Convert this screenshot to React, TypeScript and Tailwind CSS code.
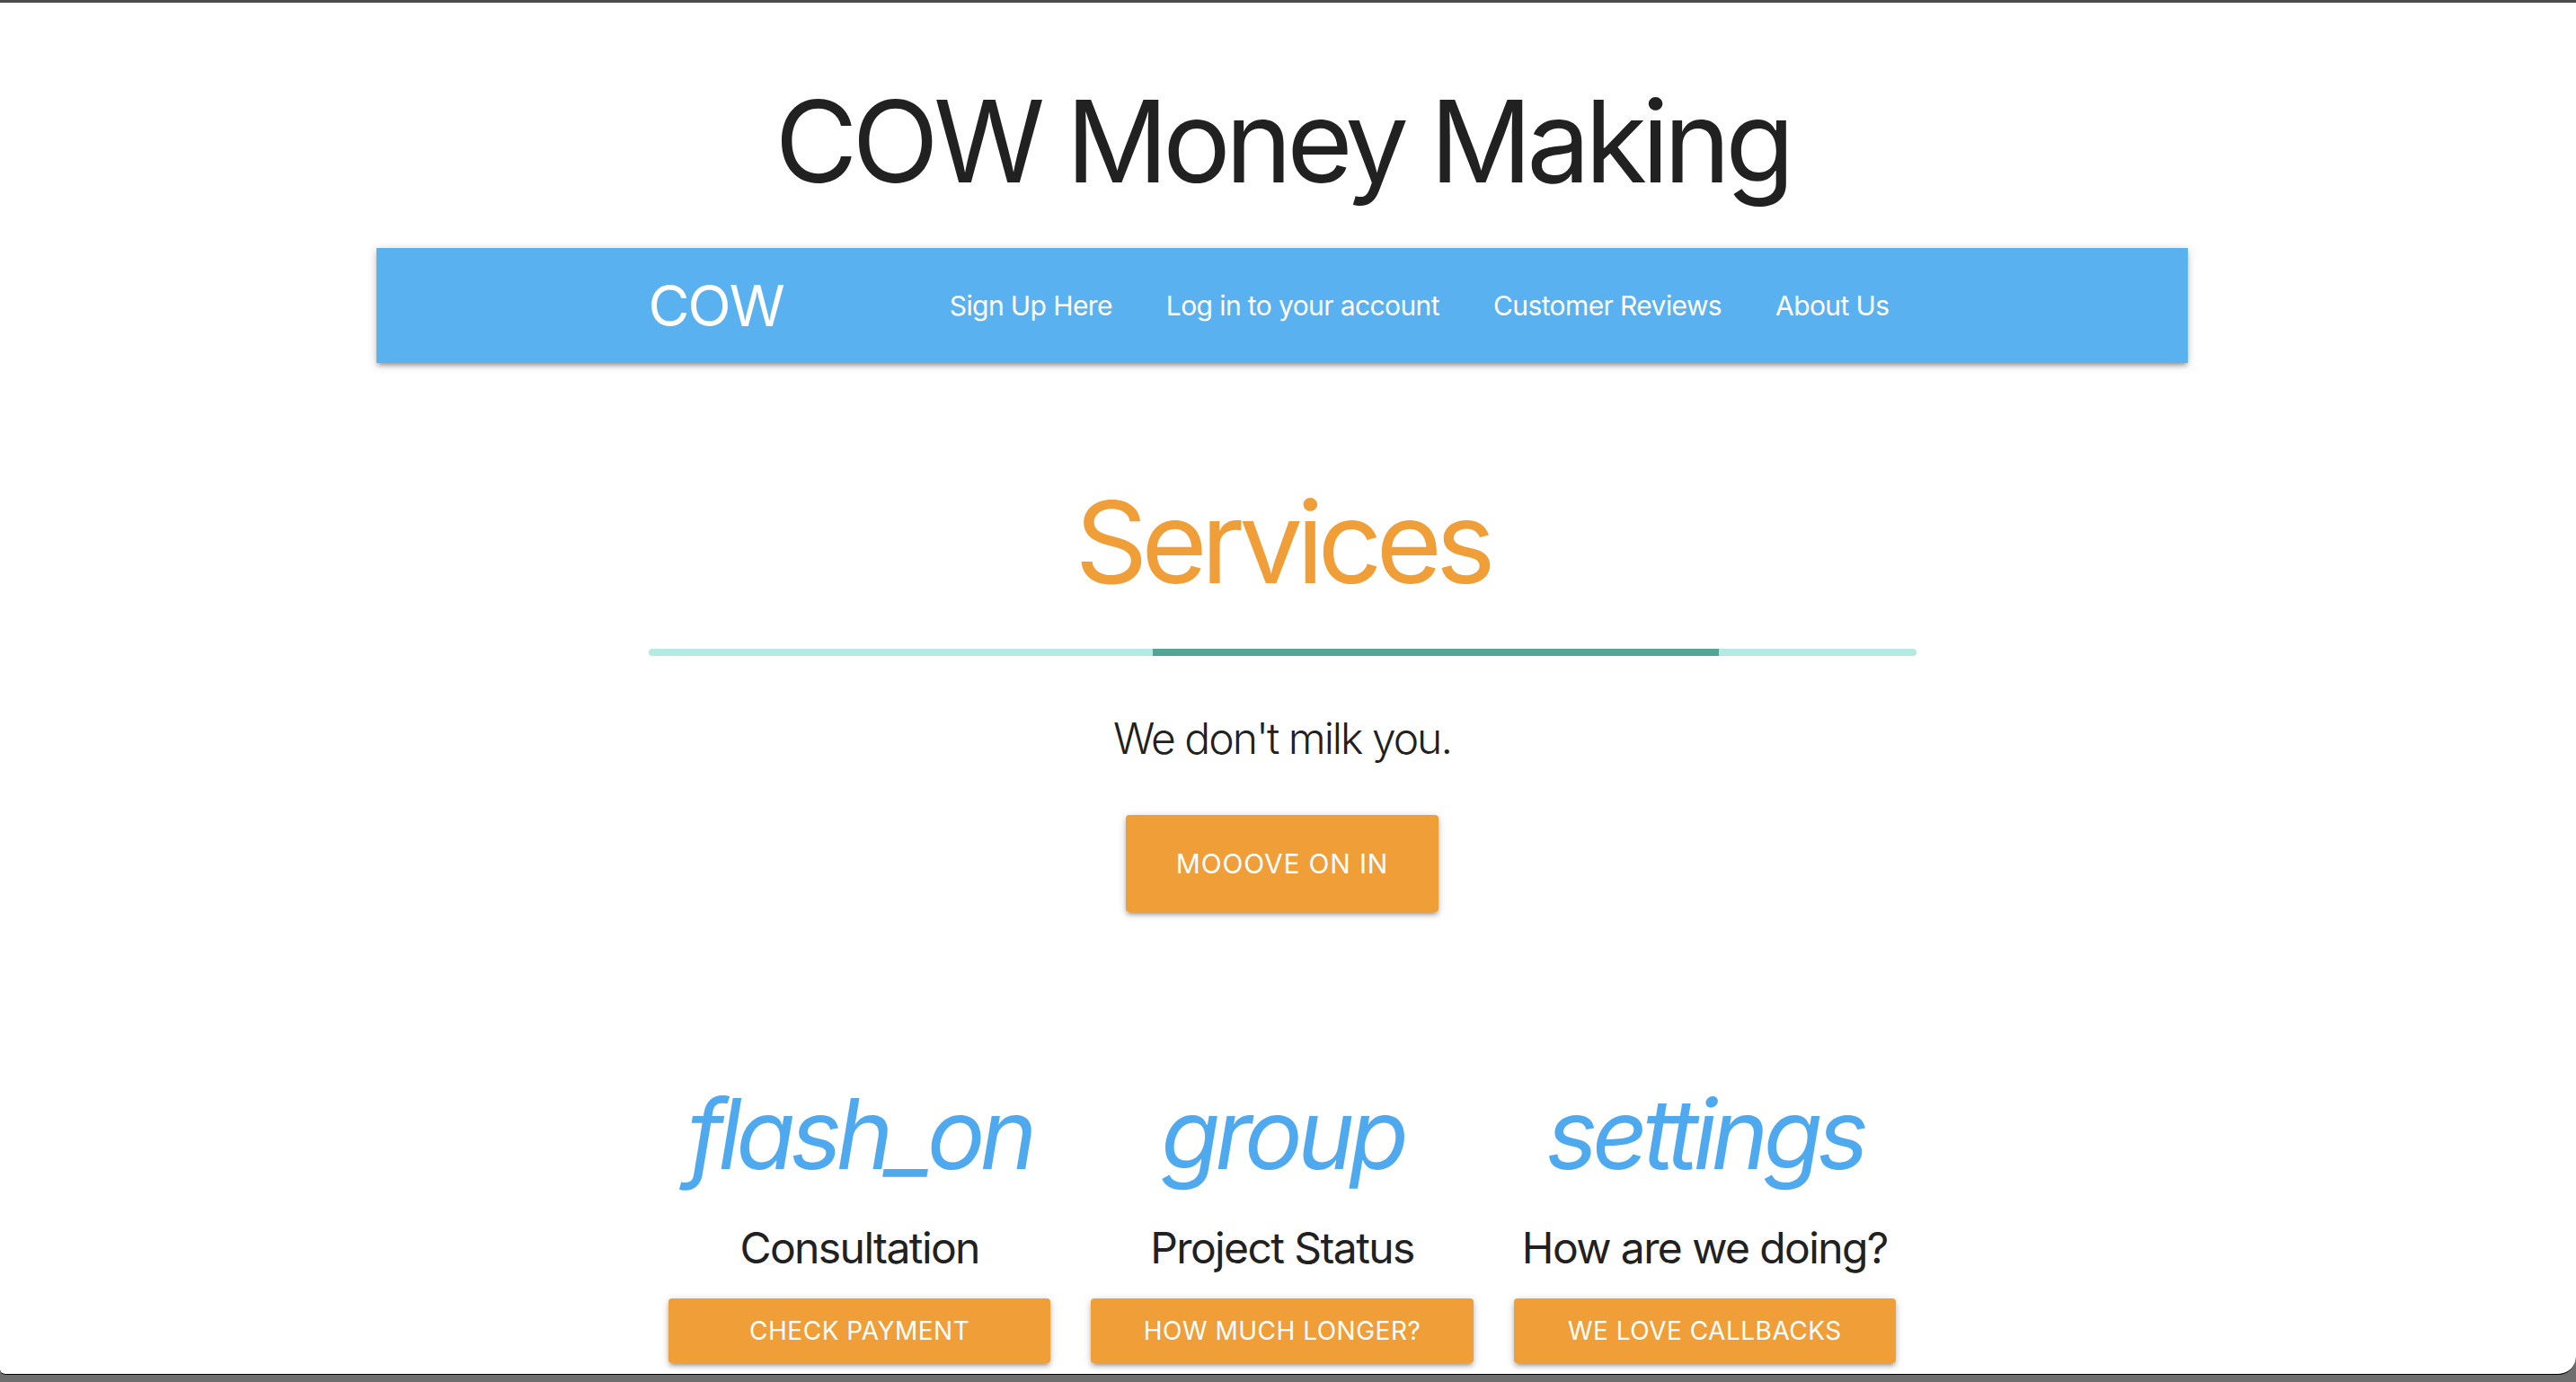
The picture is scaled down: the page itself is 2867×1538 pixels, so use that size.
import React from "react";

const font = { fontFamily: "Inter, 'Noto Sans', sans-serif" };

function OrangeBtn({ children, className = "" }: { children: React.ReactNode; className?: string }) {
  return (
    <button
      className={
        "bg-[#ef9e38] text-white uppercase rounded-[4px] shadow-[0_4px_4px_0_rgba(0,0,0,0.14),0_6px_2px_-4px_rgba(0,0,0,0.12),0_2px_10px_0_rgba(0,0,0,0.2)] " +
        className
      }
    >
      {children}
    </button>
  );
}

export default function App() {
  return (
    <div className="w-[2867px] h-[1538px] bg-[#6e6e6e] overflow-hidden" style={font}>
      <div className="h-[1530px] bg-white border-t-[3px] border-t-[#4d4d4d] border-b border-b-black rounded-br-[20px] rounded-bl-[6px] flex">
        <div className="w-[2854px] flex flex-col items-center">
          <h1 className="mt-[91px] text-[126px] leading-[126px] text-[#212121] font-normal tracking-[-6px]">
            COW Money Making
          </h1>

          <nav className="mt-[56px] w-[2016px] h-[128px] shrink-0 bg-[#5ab1ef] shadow-[0_4px_4px_0_rgba(0,0,0,0.14),0_6px_2px_-4px_rgba(0,0,0,0.12),0_2px_10px_0_rgba(0,0,0,0.2)]">
            <div className="w-[1411px] mx-auto h-full flex items-center justify-between">
              <span className="text-[63px] leading-none text-white tracking-[-2px]">COW</span>
              <ul className="flex h-full items-center">
                {["Sign Up Here", "Log in to your account", "Customer Reviews", "About Us"].map((t) => (
                  <li key={t} className="px-[30px] text-[30px] text-white tracking-[-0.6px]">
                    {t}
                  </li>
                ))}
              </ul>
            </div>
          </nav>

          <h2 className="mt-[136px] text-[126px] leading-[126px] text-[#ef9e38] font-normal tracking-[-7px]">
            Services
          </h2>

          <div className="mt-[56px] w-[1411px] h-[8px] rounded-full bg-[#b5e9e3] flex">
            <div className="ml-[561px] w-[630px] h-full bg-[#52a497]" />
          </div>

          <p className="mt-[68px] text-[48px] leading-[48px] text-[#212121] font-light tracking-[-2px]">
            We don't milk you.
          </p>

          <OrangeBtn className="mt-[61px] h-[108px] px-[56px] text-[30px] tracking-[0.8px]">Mooove on in</OrangeBtn>

          <div className="mt-[193px] w-[1411px] grid grid-cols-3">
            {[
              { icon: "flash_on", label: "Consultation", btn: "Check payment" },
              { icon: "group", label: "Project Status", btn: "How much longer?" },
              { icon: "settings", label: "How are we doing?", btn: "We love callbacks" },
            ].map((c) => (
              <div key={c.icon} className="px-[22.5px] flex flex-col items-center">
                <i className="text-[108px] leading-[108px] text-[#4fa9ee] italic tracking-[-6px]">{c.icon}</i>
                <div className="mt-[49px] text-[48px] leading-[48px] text-[#212121] tracking-[-1.6px]">{c.label}</div>
                <OrangeBtn className="mt-[32px] w-full h-[72px] text-[28px] tracking-[0.5px]">{c.btn}</OrangeBtn>
              </div>
            ))}
          </div>
        </div>
      </div>
    </div>
  );
}
